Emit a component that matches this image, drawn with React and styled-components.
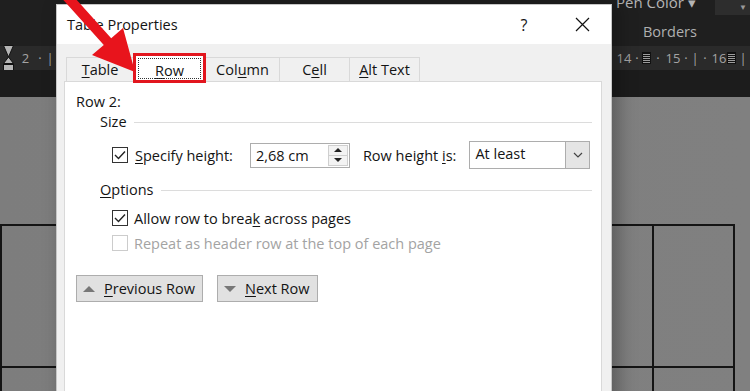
import styled, { createGlobalStyle } from "styled-components";

const GlobalStyle = createGlobalStyle`
  *, *::before, *::after { box-sizing: border-box; }
  html, body { margin: 0; padding: 0; background: #1f1f1f; }
  body { font-family: "Open Sans", "Noto Sans", sans-serif; }
`;

const Screen = styled.div`
  position: relative;
  width: 750px;
  height: 391px;
  overflow: hidden;
  display: flex;
  flex-direction: column;
  background: #1f1f1f;
`;

/* ---------- Word window behind the dialog ---------- */

const Ribbon = styled.div`
  height: 46px;
  flex-shrink: 0;
  display: flex;
  justify-content: flex-end;
  background: #1f1f1f;
`;

const RibbonGroup = styled.div`
  width: 135px;
  display: flex;
  flex-direction: column;
`;

const RibbonTop = styled.div`
  height: 22px;
  display: flex;
  align-items: flex-start;
`;

const PenColor = styled.span`
  margin-top: -7px;
  margin-left: 1px;
  font-size: 15px;
  line-height: 18px;
  color: #b4b4b4;
`;

const MoreBox = styled.div`
  margin-left: auto;
  width: 35px;
  height: 15px;
  padding-right: 3px;
  background: #2d2d2d;
  color: #9a9a9a;
  font-size: 8px;
  line-height: 13px;
  text-align: right;
`;

const GroupLabel = styled.span`
  padding-left: 28px;
  font-size: 14.5px;
  line-height: 20px;
  color: #b0b0b0;
`;

const Ruler = styled.div`
  height: 24px;
  flex-shrink: 0;
  display: flex;
  align-items: center;
  background: #2a2a2a;
  color: #a4a4a4;
  font-size: 13px;
`;

const RulerSide = styled.div`
  display: flex;
  align-items: center;
  margin-left: ${(p) => (p.$end ? "auto" : "0")};
  padding-left: ${(p) => p.$pad || 0}px;
`;

const RulerCell = styled.span`
  width: ${(p) => p.$w}px;
  text-align: center;
  line-height: 16px;
  flex-shrink: 0;
`;

const GridMark = styled.span`
  width: 9px;
  height: 12px;
  flex-shrink: 0;
  background: repeating-linear-gradient(0deg, #9c9c9c 0 1px, #111 1px 2px);
  border: 1px solid #111;
`;

const RulerGap = styled.div`
  height: 27px;
  flex-shrink: 0;
  background: #1c1c1c;
`;

const DocArea = styled.div`
  flex: 1;
  padding-top: 127px;
  background: linear-gradient(90deg, #7d7d7d 0, #808080 100%);
`;

const DocTable = styled.div`
  width: max-content;
  display: grid;
  grid-template-columns: 652px 81px;
  grid-auto-rows: 142px;
  border-top: 2px solid #141414;
  border-left: 2px solid #141414;
`;

const DocCell = styled.div`
  border-right: 2px solid #141414;
  border-bottom: 2px solid #141414;
`;

/* ---------- dialog ---------- */

const Dialog = styled.section`
  position: absolute;
  left: 56px;
  top: 4px;
  width: 556px;
  height: 410px;
  display: flex;
  flex-direction: column;
  background: #f0f0f0;
  border: 1px solid #c6c6c6;
  box-shadow: 6px 0 18px rgba(0, 0, 0, 0.3);
  font-size: 14.5px;
  color: #141414;
`;

const TitleBar = styled.header`
  height: 39px;
  flex-shrink: 0;
  display: flex;
  align-items: center;
  padding-left: 10px;
  background: #fff;
`;

const Title = styled.span`
  flex: 1;
  font-size: 14.5px;
`;

const TitleButton = styled.span`
  width: 58px;
  height: 39px;
  display: flex;
  align-items: center;
  justify-content: center;
  font-size: 16px;
`;

const Body = styled.div`
  flex: 1;
  display: flex;
  flex-direction: column;
  padding: 13px 9px 0 7px;
`;

const TabStrip = styled.div`
  height: 24px;
  display: flex;
  align-items: flex-end;
  padding-left: 2px;
`;

const Tab = styled.div`
  position: relative;
  width: ${(p) => p.$w}px;
  height: ${(p) => (p.$active ? 29 : 24)}px;
  margin-right: -1px;
  margin-bottom: ${(p) => (p.$active ? -1 : 0)}px;
  padding-top: ${(p) => (p.$active ? 5 : 0)}px;
  display: flex;
  align-items: center;
  justify-content: center;
  z-index: ${(p) => (p.$active ? 2 : 0)};
  background: ${(p) => (p.$active ? "#fff" : "#f0f0f0")};
  border: 1px solid #d9d9d9;
  border-bottom: none;

  ${(p) =>
    p.$active &&
    `
    &::before {
      content: "";
      position: absolute;
      inset: 4px 4px 3px 4px;
      border: 1px dotted #333;
    }
    &::after {
      content: "";
      position: absolute;
      inset: -1px -1px -1px -1px;
      border: 3px solid #e2161e;
    }
  `}
`;

const Key = styled.span`
  text-decoration: underline;
  text-underline-offset: 2px;
  text-decoration-thickness: 1px;
`;

const Panel = styled.div`
  flex: 1;
  display: flex;
  flex-direction: column;
  padding: 10px 9px 0 11px;
  background: #fff;
  border: 1px solid #d9d9d9;
`;

const Line = styled.div`
  line-height: 20px;
  height: 20px;
`;

const GroupHeader = styled.div`
  height: 20px;
  margin-top: ${(p) => p.$mt || 0}px;
  margin-left: 24px;
  display: flex;
  align-items: center;
  gap: 7px;
  line-height: 20px;

  &::after {
    content: "";
    flex: 1;
    height: 1px;
    background: #dcdcdc;
  }
`;

const FieldRow = styled.div`
  height: ${(p) => p.$h || 20}px;
  margin-top: ${(p) => p.$mt || 0}px;
  margin-left: 36px;
  display: flex;
  align-items: center;
  color: ${(p) => (p.$disabled ? "#a3a3a3" : "inherit")};
`;

const Label = styled.span`
  margin-left: ${(p) => p.$ml || 0}px;
  margin-right: ${(p) => p.$mr || 0}px;
  white-space: nowrap;
`;

const Box = styled.span`
  width: 16px;
  height: 16px;
  flex-shrink: 0;
  display: flex;
  align-items: center;
  justify-content: center;
  background: #fff;
  border: 1px solid ${(p) => (p.$disabled ? "#cccccc" : "#333")};
`;

const Check = ({ checked, disabled }) => (
  <Box $disabled={disabled}>
    {checked && (
      <svg width="12" height="10" viewBox="0 0 12 10">
        <path d="M1 5 L4.5 8.5 L11 1.5" fill="none" stroke="#222" strokeWidth="1.4" />
      </svg>
    )}
  </Box>
);

const NumberField = styled.div`
  width: 100px;
  height: 25px;
  display: flex;
  background: #fff;
  border: 1px solid #adadad;
`;

const FieldValue = styled.span`
  flex: 1;
  padding-left: 5px;
  line-height: 23px;
`;

const Spin = styled.div`
  width: 22px;
  display: flex;
  flex-direction: column;
  padding: 1px;
`;

const SpinButton = styled.span`
  flex: 1;
  display: flex;
  align-items: center;
  justify-content: center;
  background: #f3f3f3;
  border: 1px solid #cfcfcf;
  margin-top: ${(p) => (p.$down ? -1 : 0)}px;
`;

const Tri = styled.span`
  width: 0;
  height: 0;
  border-left: ${(p) => p.$size}px solid transparent;
  border-right: ${(p) => p.$size}px solid transparent;
  ${(p) => (p.$down ? "border-top" : "border-bottom")}: ${(p) => p.$h}px solid ${(p) => p.$color};
`;

const Select = styled.div`
  width: 121px;
  height: 28px;
  display: flex;
  background: #fff;
  border: 1px solid #adadad;
`;

const DropButton = styled.span`
  width: 24px;
  display: flex;
  align-items: center;
  justify-content: center;
  background: #e5e5e5;
  border-left: 1px solid #adadad;
`;

const ButtonRow = styled.div`
  margin-top: 22px;
  display: flex;
  gap: 14px;
`;

const NavButton = styled.div`
  width: ${(p) => p.$w}px;
  height: 27px;
  display: flex;
  align-items: center;
  gap: 9px;
  padding-left: 6px;
  background: #e1e1e1;
  border: 1px solid #adadad;
`;

const ArrowLayer = styled.svg`
  position: absolute;
  left: 0;
  top: 0;
  pointer-events: none;
`;

const tabs = [
  { w: 68, label: <><Key>T</Key>able</> },
  { w: 73, label: <><Key>R</Key>ow</>, active: true },
  { w: 75, label: <>Col<Key>u</Key>mn</> },
  { w: 71, label: <>C<Key>e</Key>ll</> },
  { w: 71, label: <><Key>A</Key>lt Text</> },
];

export default function App() {
  return (
    <Screen>
      <GlobalStyle />
      <Ribbon>
        <RibbonGroup>
          <RibbonTop>
            <PenColor>Pen Color ▾</PenColor>
            <MoreBox>▼</MoreBox>
          </RibbonTop>
          <GroupLabel>Borders</GroupLabel>
        </RibbonGroup>
      </Ribbon>

      <Ruler>
        <RulerSide $pad={3}>
          <svg width="11" height="27" viewBox="0 0 11 27">
            <polygon points="0.5,0.5 10.5,0.5 5.5,12" fill="#b5b5b5" stroke="#111" />
            <polygon points="5.5,12 10.5,18.5 0.5,18.5" fill="#b5b5b5" stroke="#111" />
            <rect x="0.5" y="19.5" width="10" height="7" fill="#b5b5b5" stroke="#111" />
          </svg>
          <RulerCell $w={23}>2</RulerCell>
          <RulerCell $w={6}>·</RulerCell>
          <RulerCell $w={14}>|</RulerCell>
        </RulerSide>
        <RulerSide $end $pad={5}>
          <RulerCell $w={16}>14</RulerCell>
          <RulerCell $w={10}>·</RulerCell>
          <GridMark />
          <RulerCell $w={14}>·</RulerCell>
          <RulerCell $w={16}>15</RulerCell>
          <RulerCell $w={10}>·</RulerCell>
          <RulerCell $w={8}>|</RulerCell>
          <RulerCell $w={12}>·</RulerCell>
          <RulerCell $w={16}>16</RulerCell>
          <GridMark />
          <RulerCell $w={14}>|</RulerCell>
        </RulerSide>
      </Ruler>
      <RulerGap />

      <DocArea>
        <DocTable>
          <DocCell />
          <DocCell />
          <DocCell />
          <DocCell />
        </DocTable>
      </DocArea>

      <Dialog>
        <TitleBar>
          <Title>Table Properties</Title>
          <TitleButton>?</TitleButton>
          <TitleButton>
            <svg width="15" height="15" viewBox="0 0 15 15">
              <path d="M1 1 L14 14 M14 1 L1 14" stroke="#111" strokeWidth="1.2" />
            </svg>
          </TitleButton>
        </TitleBar>

        <Body>
          <TabStrip>
            {tabs.map((t, i) => (
              <Tab key={i} $w={t.w} $active={t.active}>
                {t.label}
              </Tab>
            ))}
          </TabStrip>

          <Panel>
            <Line>Row 2:</Line>

            <GroupHeader>Size</GroupHeader>
            <FieldRow $h={28} $mt={9}>
              <Check checked />
              <Label $ml={7} $mr={17}>
                <Key>S</Key>pecify height:
              </Label>
              <NumberField>
                <FieldValue>2,68 cm</FieldValue>
                <Spin>
                  <SpinButton>
                    <Tri $size={4} $h={4} $color="#222" />
                  </SpinButton>
                  <SpinButton $down>
                    <Tri $down $size={4} $h={4} $color="#222" />
                  </SpinButton>
                </Spin>
              </NumberField>
              <Label $ml={13} $mr={13}>
                Row height <Key>i</Key>s:
              </Label>
              <Select>
                <FieldValue>At least</FieldValue>
                <DropButton>
                  <svg width="10" height="6" viewBox="0 0 10 6">
                    <path d="M1 1 L5 5 L9 1" fill="none" stroke="#444" strokeWidth="1.2" />
                  </svg>
                </DropButton>
              </Select>
            </FieldRow>

            <GroupHeader $mt={11}>
              <span>
                <Key>O</Key>ptions
              </span>
            </GroupHeader>
            <FieldRow $mt={8}>
              <Check checked />
              <Label $ml={6}>
                Allow row to brea<Key>k</Key> across pages
              </Label>
            </FieldRow>
            <FieldRow $mt={5} $disabled>
              <Check disabled />
              <Label $ml={6}>Repeat as header row at the top of each page</Label>
            </FieldRow>

            <ButtonRow>
              <NavButton $w={127}>
                <Tri $size={6} $h={6} $color="#777" />
                <span>
                  <Key>P</Key>revious Row
                </span>
              </NavButton>
              <NavButton $w={101}>
                <Tri $down $size={6} $h={6} $color="#777" />
                <span>
                  <Key>N</Key>ext Row
                </span>
              </NavButton>
            </ButtonRow>
          </Panel>
        </Body>
      </Dialog>

      <ArrowLayer width="750" height="391" viewBox="0 0 750 391">
        <polygon
          points="64.7,-13.4 111.2,38.2 123,28 135,72 92,55 103.8,44.9 57.3,-6.7"
          fill="#e8141c"
        />
      </ArrowLayer>
    </Screen>
  );
}
